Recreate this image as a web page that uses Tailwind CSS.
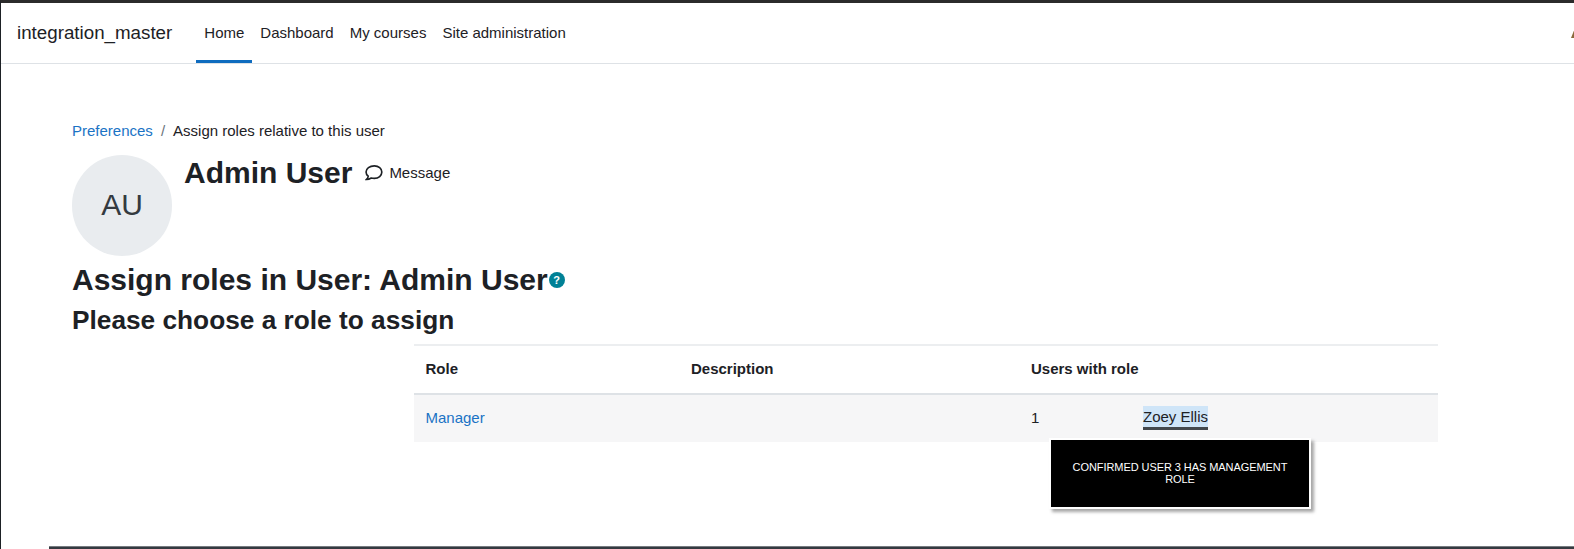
<!DOCTYPE html>
<html lang="en">
<head>
    <meta charset="UTF-8" />
    <meta name="viewport" content="width=device-width, initial-scale=1.0"/>
    <title>Assign roles</title>
    <script src="https://cdn.jsdelivr.net/npm/@tailwindcss/browser@4"></script>
</head>
<body class="bg-white h-[549px] overflow-hidden font-['Liberation_Sans',Arial,sans-serif] text-[15px] text-[#1d2125]">
    <div class="h-[549px] border-t-[3px] border-t-[#2b2b2b] border-l border-l-[#1d2125] flex flex-col">

        <!-- top nav -->
        <header class="h-[61px] shrink-0 border-b border-[#dee2e6] flex items-stretch relative overflow-hidden">
            <a class="pl-4 pr-6 self-center text-[18.75px] leading-[28px] -mt-[1px]">integration_master</a>
            <nav class="flex items-stretch">
                <a class="px-2 flex items-center border-b-[3px] border-[#0f6cbf] pt-[3px]">Home</a>
                <a class="px-2 flex items-center">Dashboard</a>
                <a class="px-2 flex items-center">My courses</a>
                <a class="px-2 flex items-center">Site administration</a>
            </nav>
            <span class="absolute left-[1570px] top-[25px] w-0 h-0 border-l-[4px] border-r-[4px] border-b-[10px] border-l-transparent border-r-transparent border-b-[#8a6a3c]"></span>
        </header>

        <main class="flex-1 pl-[71px] pr-[136px] pt-[56px] relative">
            <!-- breadcrumb -->
            <div class="flex items-center h-[22px]">
                <a class="text-[#1a73c5]">Preferences</a>
                <span class="px-2 text-[#6a737b]">/</span>
                <span>Assign roles relative to this user</span>
            </div>

            <!-- user header -->
            <div class="flex mt-[13px]">
                <div class="w-[100px] h-[101px] rounded-full bg-[#e9ecef] flex items-center justify-center text-[30px] text-[#343a40] pb-[2px]">AU</div>
                <h2 class="ml-3 text-[30px] leading-[36px] font-bold">Admin User</h2>
                <div class="ml-[13px] h-[36px] flex items-center">
                    <svg width="18" height="16" viewBox="2 2 15 13.5" fill="none" stroke="#1d2125" stroke-width="1.4" class="mr-[6px]">
                        <path d="M9.8 2.8c-4 0-7 2.2-7 5.2 0 1.4.7 2.6 1.8 3.5-.1 1-.6 2-1.4 2.7 1.6 0 3-.6 4-1.2.8.2 1.6.3 2.6.3 3.6 0 6.3-2.3 6.3-5.3s-2.7-5.2-6.3-5.2z"/>
                    </svg>
                    <span>Message</span>
                </div>
            </div>

            <h2 class="text-[30px] leading-[36px] font-bold flex items-center mt-[6px]">Assign roles in User: Admin User<span class="ml-[1px] mt-[-1px] w-4 h-4 rounded-full bg-[#008196] text-white text-[11px] font-bold flex items-center justify-center">?</span></h2>
            <h3 class="text-[26.25px] leading-[32px] font-bold mt-[6px]">Please choose a role to assign</h3>

            <!-- roles table -->
            <div class="ml-[342px] w-[1024px] mt-[8px] relative">
                <table class="w-full border-collapse table-fixed">
                    <thead>
                        <tr class="h-[49px] border-t-2 border-t-[#eceef0] border-b-2 border-b-[#dee2e6] font-bold text-left">
                            <th class="w-[265px] pl-[11.5px] pr-3">Role</th>
                            <th class="w-[340px] px-3">Description</th>
                            <th class="px-3">Users with role</th>
                        </tr>
                    </thead>
                    <tbody>
                        <tr class="h-[48px] bg-[#f6f6f7]">
                            <td class="pl-[11.5px] pr-3"><a class="text-[#1a73c5]">Manager</a></td>
                            <td class="px-3"></td>
                            <td class="px-3">
                                <div class="flex items-center">
                                    <span class="w-[112px]">1</span>
                                    <span class="bg-[#cfe5f8] border-b-[3px] border-[#43484d] leading-[22px] h-[24px] -mt-[1px]">Zoey Ellis</span>
                                </div>
                            </td>
                        </tr>
                    </tbody>
                </table>
                <!-- tooltip -->
                <div class="absolute left-[635px] top-[94px] w-[262px] h-[71px] bg-black border-2 border-white shadow-[3px_3px_3px_rgba(0,0,0,0.35)] text-white text-[11px] leading-[12px] tracking-[-0.07px] text-center flex items-center justify-center px-5 pb-[2px]">
                    CONFIRMED USER 3 HAS MANAGEMENT ROLE
                </div>
            </div>
        </main>

        <footer class="h-[3px] shrink-0 ml-[48px] bg-[#343a40] border-t border-t-[#777b80]"></footer>
    </div>
</body>
</html>
